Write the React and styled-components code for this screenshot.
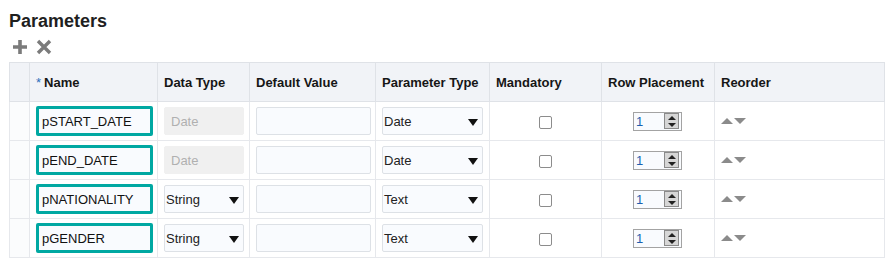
import styled, { createGlobalStyle } from "styled-components";

const GlobalStyle = createGlobalStyle`
  body {
    margin: 0;
    background: #fff;
    font-family: "Liberation Sans", Arial, sans-serif;
    color: #1a1a1a;
  }
`;

const Page = styled.div`
  padding: 10px 0 0 9px;
`;

const Heading = styled.h2`
  margin: 0;
  font-size: 18px;
  line-height: 22px;
  font-weight: 700;
  color: #1f1f1f;
`;

const Toolbar = styled.div`
  display: flex;
  align-items: center;
  gap: 8px;
  height: 30px;
  padding-left: 3px;
`;

const ToolIcon = styled.svg`
  width: 16px;
  height: 16px;
  display: block;
`;

const Table = styled.table`
  border-collapse: collapse;
  table-layout: fixed;
  width: 875px;
  font-size: 13px;
`;

const HeadCell = styled.th`
  height: 38px;
  padding: 0 0 0 6px;
  text-align: left;
  font-weight: 700;
  background: #f1f3f7;
  border: 1px solid #dfe2e7;
  color: #161616;
  white-space: nowrap;
`;

const Cell = styled.td`
  height: 38px;
  padding: 0 0 0 ${(p) => p.$pad ?? 6}px;
  border: 1px solid #e6e8ec;
  text-align: ${(p) => (p.$center ? "center" : "left")};
  background: ${(p) => (p.$stub ? "#fbfcfd" : "#fff")};
  vertical-align: middle;
`;

const Star = styled.span`
  color: #2a6ebb;
  font-weight: 400;
  margin-right: 3px;
`;

const NameBox = styled.div`
  box-sizing: border-box;
  width: 117px;
  height: 30px;
  border: 3px solid #00a8a2;
  border-radius: 2px;
  background: #f9fbfe;
  padding: 0 3px;
  display: flex;
  align-items: center;
  color: #111;
`;

const Field = styled.div`
  box-sizing: border-box;
  width: ${(p) => p.$w}px;
  height: 28px;
  border: 1px solid ${(p) => (p.$disabled ? "#f0f0f0" : "#dde1e6")};
  border-radius: 2px;
  background: ${(p) => (p.$disabled ? "#f0f0f0" : "#f9fbfe")};
  color: ${(p) => (p.$disabled ? "#b0b0b0" : "#222")};
  padding: 0 4px 0 ${(p) => (p.$disabled ? 6 : 1)}px;
  display: flex;
  align-items: center;
  justify-content: space-between;
`;

const Caret = styled.span`
  width: 0;
  height: 0;
  margin-top: 2px;
  border-left: 5px solid transparent;
  border-right: 5px solid transparent;
  border-top: 7px solid #111;
`;

const Check = styled.span`
  display: inline-block;
  width: 11px;
  height: 11px;
  border: 1px solid #8c8c8c;
  border-radius: 2px;
  background: #fff;
  vertical-align: middle;
`;

const Spinner = styled.div`
  box-sizing: border-box;
  margin-left: 31px;
  width: 49px;
  height: 19px;
  border: 1px solid #a3a3a3;
  background: #f9fbfe;
  display: flex;
  align-items: center;
  justify-content: space-between;
  padding: 0 2px;
  color: #1c5fae;
`;

const SpinButtons = styled.div`
  box-sizing: border-box;
  width: 15px;
  height: 16px;
  border: 1px solid #8a8a8a;
  background: #d6d6d6;
  display: flex;
  flex-direction: column;
  align-items: center;
  justify-content: space-around;
`;

const SpinArrow = styled.span`
  width: 0;
  height: 0;
  border-left: 4px solid transparent;
  border-right: 4px solid transparent;
  ${(p) => (p.$up ? "border-bottom: 4px solid #222;" : "border-top: 4px solid #222;")}
`;

const Reorder = styled.div`
  display: flex;
  gap: 1px;
`;

const Tri = styled.span`
  width: 0;
  height: 0;
  border-left: 6px solid transparent;
  border-right: 6px solid transparent;
  ${(p) => (p.$up ? "border-bottom: 6px solid #8b8b8b;" : "border-top: 6px solid #8b8b8b;")}
`;

const rows = [
  { name: "pSTART_DATE", type: "Date", param: "Date", locked: true },
  { name: "pEND_DATE", type: "Date", param: "Date", locked: true },
  { name: "pNATIONALITY", type: "String", param: "Text" },
  { name: "pGENDER", type: "String", param: "Text" },
];

const widths = [20, 128, 92, 126, 114, 112, 113, 170];

export default function App() {
  return (
    <Page>
      <GlobalStyle />
      <Heading>Parameters</Heading>
      <Toolbar>
        <ToolIcon viewBox="0 0 16 16">
          <path d="M8 1v14M1 8h14" stroke="#7b7b7b" strokeWidth="3.6" />
        </ToolIcon>
        <ToolIcon viewBox="0 0 16 16">
          <path d="M2 2l12 12M14 2L2 14" stroke="#7b7b7b" strokeWidth="3.4" />
        </ToolIcon>
      </Toolbar>
      <Table>
        <colgroup>
          {widths.map((w, i) => (
            <col key={i} style={{ width: w }} />
          ))}
        </colgroup>
        <thead>
          <tr>
            <HeadCell />
            <HeadCell>
              <Star>*</Star>Name
            </HeadCell>
            <HeadCell>Data Type</HeadCell>
            <HeadCell>Default Value</HeadCell>
            <HeadCell>Parameter Type</HeadCell>
            <HeadCell>Mandatory</HeadCell>
            <HeadCell>Row Placement</HeadCell>
            <HeadCell>Reorder</HeadCell>
          </tr>
        </thead>
        <tbody>
          {rows.map((r) => (
            <tr key={r.name}>
              <Cell $stub />
              <Cell>
                <NameBox>{r.name}</NameBox>
              </Cell>
              <Cell>
                {r.locked ? (
                  <Field $w={80} $disabled>
                    {r.type}
                  </Field>
                ) : (
                  <Field $w={80}>
                    {r.type}
                    <Caret />
                  </Field>
                )}
              </Cell>
              <Cell>
                <Field $w={115} />
              </Cell>
              <Cell>
                <Field $w={101}>
                  {r.param}
                  <Caret />
                </Field>
              </Cell>
              <Cell $center $pad={0}>
                <Check />
              </Cell>
              <Cell $pad={0}>
                <Spinner>
                  1
                  <SpinButtons>
                    <SpinArrow $up />
                    <SpinArrow />
                  </SpinButtons>
                </Spinner>
              </Cell>
              <Cell>
                <Reorder>
                  <Tri $up />
                  <Tri />
                </Reorder>
              </Cell>
            </tr>
          ))}
        </tbody>
      </Table>
    </Page>
  );
}
